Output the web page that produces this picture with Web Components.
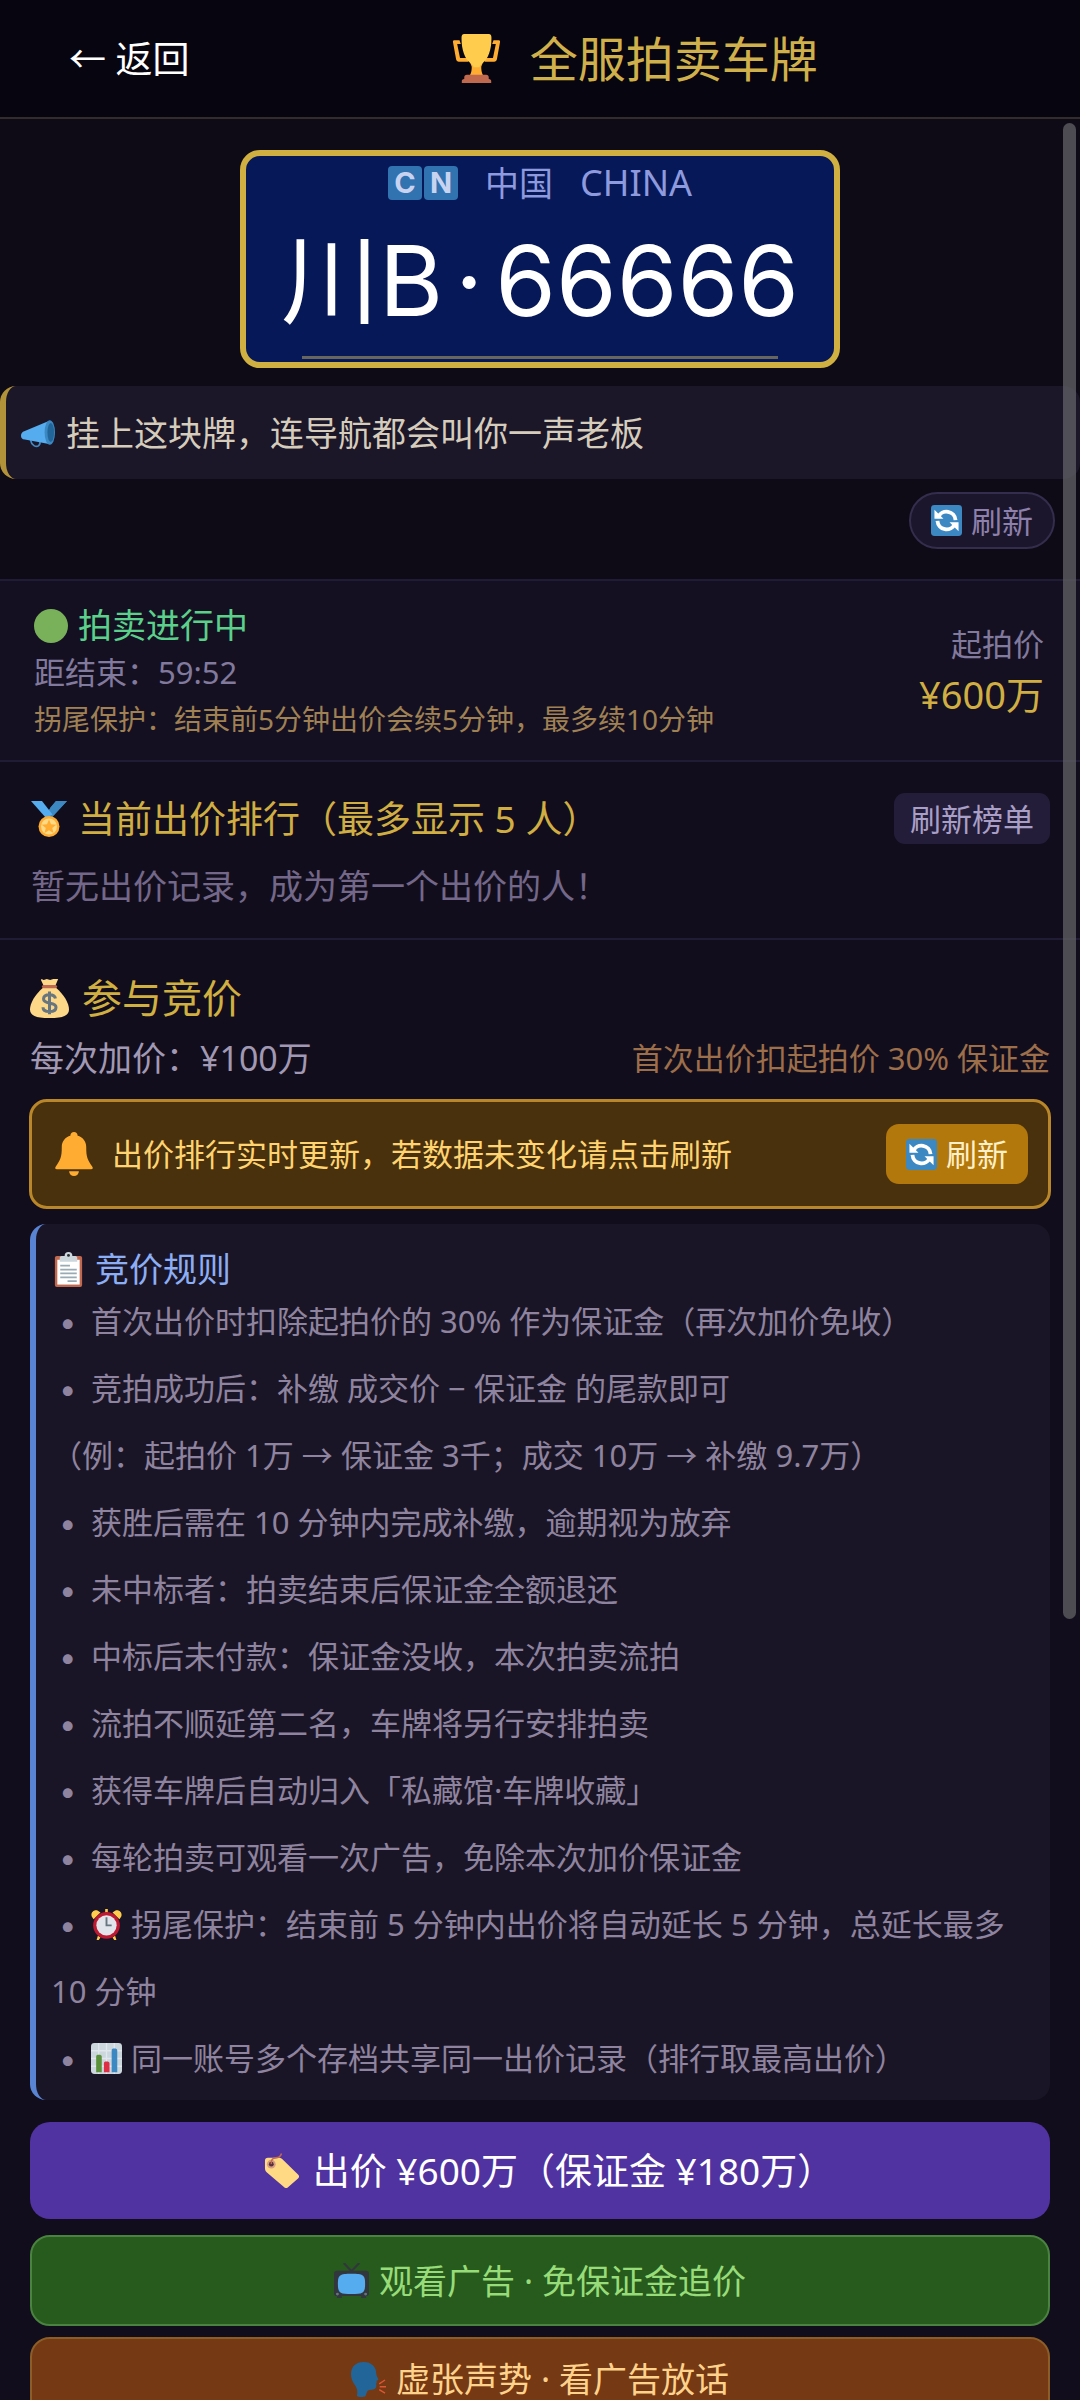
<!DOCTYPE html>
<html lang="zh-CN">
<head>
<meta charset="utf-8">
<meta name="viewport" content="width=device-width, initial-scale=1">
<title>全服拍卖车牌</title>
<style>
  html, body { margin: 0; height: 100%; background: #120d1c; }
  body { font-family: "Noto Sans", "Noto Sans CJK SC", sans-serif; font-size: 31px; }
</style>
</head>
<body>
<auction-page></auction-page>

<script>
const ICONS = {
  trophy: `<path d="M5.5 4.5H1.8C1 4.500 .6 5 .7 5.800L3 18.500C3.200 19.500 4 20.300 5 20.300H12V17.700H5.900L3.800 7.300H6.500ZM30.500 4.500H34.200C35 4.500 35.400 5 35.300 5.800L33 18.500C32.800 19.500 32 20.300 31 20.300H24V17.700H30.100L32.200 7.300H29.500Z" fill="#FFAC33"/><path d="M13 20h10l-1.500 4c0 4 .8 5.500 2.500 8H12c1.700-2.500 2.500-4 2.500-8z" fill="#FFAC33"/><path d="M9 0h18c1.500 0 2 1 2 3 0 9-2.500 15-6 18-1.500 1.500-2.500 2-2.800 3.500h-4.400C15.500 23 14.500 22.500 13 21 9.500 18 7 12 7 3c0-2 .5-3 2-3z" fill="#FFCC4D"/><path d="M11 30h14c1.300 0 2 .7 2 2v1c1.300 0 1.800.7 1.800 1.600V36H7.200v-1.400C7.200 33.700 7.700 33 9 33v-1c0-1.300.7-2 2-2z" fill="#C1694F"/>`,
  megaphone: `<path d="M10 25c1 6 6 9 9 6 2-2 1-5 1-6" fill="none" stroke="#4289C1" stroke-width="1.800"/><path d="M30 5 4 16c-3 1-4 3-4 5s1 4 4 4l27 5z" fill="#55ACEE"/><ellipse cx="30.500" cy="17.500" rx="5.500" ry="13" fill="#3B88C3"/><ellipse cx="31.500" cy="17.500" rx="3.500" ry="10" fill="#226699"/>`,
  refresh: `<rect width="36" height="36" rx="4" fill="#3B88C3"/><path d="M8.400 14A10.500 10.500 0 0 1 28.500 17.500M27.600 22A10.500 10.500 0 0 1 7.500 18.500" fill="none" stroke="#fff" stroke-width="4.400"/><path d="M4 5.500v10.500h10.500zM32 30.500V20H21.500z" fill="#fff"/>`,
  circle: `<circle cx="18" cy="18" r="18" fill="#78B159"/>`,
  medal: `<path d="M36 0H25l-6 7 4 7-5 5z" fill="#3B88C3"/><path d="M36 0H25L14 13.500 20.500 17z" fill="#3B88C3"/><path d="M0 0h11l10.500 13.500L15 17z" fill="#55ACEE"/><circle cx="18" cy="25.500" r="10.500" fill="#FFAC33"/><circle cx="18" cy="25.500" r="8" fill="#FFD983"/><path d="m18 18.500 2 4.800 5.200.4-4 3.300 1.300 5-4.500-2.700L13.500 32l1.300-5-4-3.300 5.200-.4z" fill="#FFAC33"/>`,
  moneybag: `<path d="M12 8h12c7 6 12 14 12 20 0 6-5 8-18 8S0 34 0 28C0 22 5 14 12 8z" fill="#FDD888"/><path d="M11 0c2 2 3 0 4.500 0S18 1.500 20 .5 24 0 26 0l-2.500 6h-11L10 .8z" fill="#FDD888"/><rect x="11" y="5.500" width="14" height="3" rx="1.500" fill="#BF6952"/><path d="M23.500 18c-.5-2.500-3-3.500-5.500-3.500-3 0-5.500 1.300-5.500 4 0 5.500 11.500 2.500 11.500 7.500 0 2.800-2.700 4-6 4s-6-1.300-6-4M18 11.500v21" fill="none" stroke="#67757F" stroke-width="2.800"/>`,
  bell: `<path d="M18 0c1.700 0 3 1.200 3 3 4 1 7 4.500 7 9 0 9 1 10 5 16.500.8 1.300.3 2-1 2H4c-1.300 0-1.800-.7-1-2C7 22 8 21 8 12c0-4.500 3-8 7-9 0-1.800 1.300-3 3-3zM14 32.200h8a4 3.800 0 0 1-8 0z" fill="#FFAC33"/>`,
  clipboard: `<rect x="4" y="4" width="28" height="32" rx="2" fill="#C1694F"/><rect x="6.500" y="8" width="23" height="25.500" fill="#fff"/><path d="M14 4a4 4 0 0 1 8 0h3c1 0 2 1 2 2v4H9V6c0-1 1-2 2-2z" fill="#CCD6DD"/><circle cx="18" cy="3.500" r="1.500" fill="#292F33"/><path d="M9.500 14h10M9.500 18h17M9.500 22h17M9.500 26h17M17 30h9.500" stroke="#99AAB5" stroke-width="1.800"/>`,
  clock: `<path d="M1 9C-1 5 3 0 8 2l3 2-8 8zM35 9c2-4-2-9-7-7l-3 2 8 8z" fill="#FFCC4D"/><path d="M16.500 0h3v5h-3zM8 31l3 2-2 3H6.500zM28 31l-3 2 2 3h2.500z" fill="#FFCC4D"/><circle cx="18" cy="19" r="15.500" fill="#BE1931"/><circle cx="18" cy="19" r="11.800" fill="#E1E4EA"/><path d="M18 9.500V19h6" fill="none" stroke="#66757F" stroke-width="2.200"/>`,
  chart: `<rect width="36" height="36" rx="4" fill="#CCD6DD"/><path d="M0 9h36M0 18h36M0 27h36M9 0v36M18 0v36M27 0v36" stroke="#E1E8ED" stroke-width="1.500"/><path d="M6 34V16c0-2 .7-2.500 3-2.500s3.500.5 3.500 2.500v18z" fill="#5C913B"/><path d="M15 34V24c0-2 .7-2.500 3-2.500s3.500.5 3.500 2.500v10z" fill="#DD2E44"/><path d="M24 34V9c0-2 .7-2.500 3-2.500s3.500.5 3.500 2.500v25z" fill="#3B88C3"/>`,
  tag: `<path d="M1 8C1 6 2 5 4 5l11 0c2 0 3 .5 4.500 2L35 22c1.500 1.500 1.300 3 0 4.200L25 35c-1.500 1.400-3 1.400-4.500 0L3 20c-1.500-1.300-2-2.500-2-4.500z" fill="#FFD983"/><circle cx="7.500" cy="11.500" r="4.500" fill="#D99E82"/><circle cx="7.500" cy="11.500" r="2.500" fill="#54313F"/><path d="M7.500 11.500C7 7 9 5 12 5s5-1.500 6-4.500" fill="none" stroke="#C1694F" stroke-width="1.600"/>`,
  tv: `<path d="m10 0 8 8.500L26 0" fill="none" stroke="#31373D" stroke-width="2.200"/><path d="M3 8h30c2 0 3 1 3 3v20c0 2-1 3-3 3v2h-5v-2H8v2H3v-2c-2 0-3-1-3-3V11c0-2 1-3 3-3z" fill="#31373D"/><path d="M18 11c12 0 14 1 14 10.500S30 32 18 32 4 31 4 21.500 6 11 18 11z" fill="#55ACEE"/><circle cx="3.500" cy="32" r="1.500" fill="#66757F"/><circle cx="32.500" cy="32" r="1.500" fill="#66757F"/>`,
  speaker: `<path d="M13 0c8 0 13 5 13 12 0 2 1.500 4 2 5.500.3 1-.3 1.500-2 1.700.6 1.300.7 2.300-.2 3.200.6 1.700.3 5-2.300 5.600-3 .7-6 .4-7 2.500L15 35c-2 1.300-7 1.300-9 0 1-4 .6-7-1.500-10.500C2 21 0 17 0 12.500 0 5 5 0 13 0z" fill="#269"/><path d="m29 22.500 6-4M29.500 25.500H36M29 28.500l6 3.500" stroke="#DD5533" stroke-width="1.500"/>`
};

/* Defines an element whose shadow root is cloned from a template. */
function define(name, html, init) {
  const template = document.createElement('template');
  template.innerHTML = '<style>*{box-sizing:border-box}:host{display:block}button{font:inherit;cursor:pointer;margin:0}</style>' + html;
  customElements.define(name, class extends HTMLElement {
    constructor() {
      super();
      this.attachShadow({ mode: 'open' }).append(template.content.cloneNode(true));
    }
    connectedCallback() { if (init) init(this, this.shadowRoot); }
  });
}

define('ui-icon', `
  <style>
    :host { display: inline-block; flex: none; width: var(--icon, 36px); height: var(--icon, 36px); }
    svg { display: block; width: 100%; height: 100%; }
  </style>
  <svg viewBox="0 0 36 36" aria-hidden="true"></svg>`,
  (host, root) => { root.querySelector('svg').innerHTML = ICONS[host.getAttribute('name')]; });

define('auction-header', `
  <style>
    :host { background: #070510; border-bottom: 2px solid #322c2c; flex: none; }
    header { display: flex; align-items: center; height: 117px; }
    button { background: none; border: 0; padding: 0 0 0 69px; color: #fff; font-size: 37px; line-height: 60px; }
    h1 { flex: 1; display: flex; justify-content: center; align-items: center; gap: 29px; margin: 0;
         font-size: 48px; line-height: 60px; font-weight: 400; color: #d0b04a; --icon: 49px; }
  </style>
  <header>
    <button type="button">← 返回</button>
    <h1><ui-icon name="trophy"></ui-icon><slot></slot></h1>
  </header>`);

define('license-plate', `
  <style>
    :host { width: 600px; max-width: 100%; margin: 0 auto; }
    .plate { display: flex; flex-direction: column; align-items: center; height: 218px; background: #071858;
             border: 6px solid #d0b040; border-radius: 20px; padding-top: 5px; }
    .country { display: flex; align-items: center; gap: 27px; color: #8e9ade; font-size: 34px; line-height: 44px; }
    .latin { font-size: 36px; }
    .flag { display: flex; gap: 2px; }
    .flag span { width: 34px; border-radius: 4px; background: #3172b0; color: #c9d3f0; text-align: center;
                 font: 700 29px/34px Inter, sans-serif; }
    .number { flex: 1; display: flex; align-items: center; gap: 12px; color: #fff; font-family: Inter, "Noto Sans CJK SC", sans-serif;
              font-size: 98px; line-height: 120px; white-space: nowrap; }
    .seam { width: 476px; height: 3px; background: #67655c; margin-bottom: 3px; }
  </style>
  <div class="plate">
    <div class="country"><span class="flag"><span>C</span><span>N</span></span><span>中国</span><span class="latin">CHINA</span></div>
    <div class="number"><slot></slot></div>
    <div class="seam"></div>
  </div>`);

define('notice-bar', `
  <style>
    .bar { display: flex; align-items: center; gap: 11px; height: 93px; padding-left: 15px; background: #1b1628;
           border-left: 6px solid #b3933a; border-radius: 16px; color: #d5ccbc; font-size: 34px; line-height: 48px; --icon: 34px; }
  </style>
  <div class="bar"><ui-icon name="megaphone"></ui-icon><slot></slot></div>`);

define('refresh-button', `
  <style>
    :host { flex: none; }
    button { display: flex; align-items: center; gap: 9px; height: 57px; padding: 0 20px; background: #1b162b;
             border: 2px solid #352d4d; border-radius: 29px; color: #8e80ac; font-size: 31px; line-height: 40px; --icon: 31px; }
    :host([tone="gold"]) button { height: 60px; background: #b3780c; border: 0; border-radius: 13px; color: #fff0c8; }
  </style>
  <button type="button"><ui-icon name="refresh"></ui-icon><slot></slot></button>`);

define('auction-status', `
  <style>
    section { display: flex; justify-content: space-between; align-items: center; padding: 21px 36px 17px 34px;
              background: #141022; border: solid #211c35; border-width: 2px 0; }
    p { margin: 0; line-height: 47px; font-size: 31px; color: #827a9d; }
    .state { display: flex; align-items: center; gap: 10px; font-size: 34px; color: #5bd08a; --icon: 34px; }
    .guard { font-size: 28px; color: #a08153; }
    .price { text-align: right; padding-bottom: 8px; }
    .price p { line-height: 50px; }
    .price .amount { font-size: 38px; color: #d0ae42; }
  </style>
  <section>
    <div>
      <p class="state"><ui-icon name="circle"></ui-icon>拍卖进行中</p>
      <p>距结束：59:52</p>
      <p class="guard">拐尾保护：结束前5分钟出价会续5分钟，最多续10分钟</p>
    </div>
    <div class="price"><p>起拍价</p><p class="amount">¥600万</p></div>
  </section>`);

define('bid-ranking', `
  <style>
    section { padding: 31px 30px 28px 31px; border-bottom: 2px solid #211c35; }
    .head { display: flex; justify-content: space-between; align-items: center; }
    h2 { display: flex; align-items: center; gap: 11px; margin: 0; font-size: 37px; line-height: 50px; font-weight: 400; color: #d0ae42; }
    button { height: 51px; padding: 0 16px; background: #231d39; border: 0; border-radius: 11px; color: #a99fc6; font-size: 31px; line-height: 40px; }
    p { margin: 18px 0 0; font-size: 34px; line-height: 48px; color: #736889; }
  </style>
  <section>
    <div class="head">
      <h2><ui-icon name="medal"></ui-icon>当前出价排行（最多显示 5 人）</h2>
      <button type="button">刷新榜单</button>
    </div>
    <p>暂无出价记录，成为第一个出价的人！</p>
  </section>`);

define('bid-alert', `
  <style>
    .alert { display: flex; align-items: center; gap: 16px; height: 110px; padding: 0 20px; background: #49310d;
             border: 3px solid #b98628; border-radius: 18px; color: #ffd470; font-size: 31px; line-height: 44px; --icon: 44px; }
    .text { flex: 1; }
  </style>
  <div class="alert" role="status">
    <ui-icon name="bell"></ui-icon><span class="text"><slot></slot></span><refresh-button tone="gold">刷新</refresh-button>
  </div>`);

define('bid-rules', `
  <style>
    section { padding: 26px 21px 8px 15px; background: #1a1526; border-left: 6px solid #5984d4; border-radius: 16px; color: #8f849f; }
    h3 { display: flex; align-items: center; gap: 9px; margin: 0; font-size: 34px; line-height: 38px; font-weight: 400; color: #8caef4; --icon: 35px; }
    ul { margin: 0; padding: 0; list-style: none; font-size: 31px; line-height: 67px; --icon: 31px; }
    li:not(.note)::before { content: "•"; display: inline-block; width: 32px; margin-left: 8px; font-family: Inter, sans-serif; }
    ui-icon { vertical-align: -4px; margin-right: 9px; }
    h3 ui-icon { margin: 0; }
  </style>
  <section>
    <h3><ui-icon name="clipboard"></ui-icon>竞价规则</h3>
    <ul>
      <li>首次出价时扣除起拍价的 30% 作为保证金（再次加价免收）</li>
      <li>竞拍成功后：补缴 成交价 − 保证金 的尾款即可</li>
      <li class="note">（例：起拍价 1万 → 保证金 3千；成交 10万 → 补缴 9.7万）</li>
      <li>获胜后需在 10 分钟内完成补缴，逾期视为放弃</li>
      <li>未中标者：拍卖结束后保证金全额退还</li>
      <li>中标后未付款：保证金没收，本次拍卖流拍</li>
      <li>流拍不顺延第二名，车牌将另行安排拍卖</li>
      <li>获得车牌后自动归入「私藏馆·车牌收藏」</li>
      <li>每轮拍卖可观看一次广告，免除本次加价保证金</li>
      <li><ui-icon name="clock"></ui-icon>拐尾保护：结束前 5 分钟内出价将自动延长 5 分钟，总延长最多 10 分钟</li>
      <li><ui-icon name="chart"></ui-icon>同一账号多个存档共享同一出价记录（排行取最高出价）</li>
    </ul>
  </section>`);

define('action-button', `
  <style>
    button { display: flex; justify-content: center; align-items: center; gap: 10px; width: 100%; height: 91px; padding: 0;
             border: 2px solid #4a8340; border-radius: 20px; background: #275a1d; color: #97dc78; font-size: 34px; line-height: 40px; --icon: 35px; }
    :host([tone="bid"]) button { height: 97px; padding-left: 18px; border: 0; background: #5032a0; color: #fff; font-size: 37px; gap: 14px; }
    :host([tone="bluff"]) button { height: 84px; border-color: #8c5d26; background: #753914; color: #ffd28c; }
  </style>
  <button type="button"><slot name="icon"></slot><slot></slot></button>`);

define('bid-panel', `
  <style>
    section { padding: 30px 30px 20px; }
    h2 { display: flex; align-items: center; gap: 13px; margin: 0; font-size: 40px; line-height: 56px; font-weight: 400; color: #d0b040; --icon: 39px; }
    .terms { display: flex; justify-content: space-between; margin: 8px 0 17px; font-size: 34px; line-height: 48px; color: #a199b3; }
    .terms .deposit { font-size: 31px; color: #9d6e4a; }
    bid-alert { margin: 0 -1px; }
    bid-rules { margin: 15px 0 22px; }
    .actions { display: flex; flex-direction: column; gap: 11px; }
    .actions > :first-child { margin-bottom: 5px; }
  </style>
  <section>
    <h2><ui-icon name="moneybag"></ui-icon>参与竞价</h2>
    <div class="terms"><span>每次加价：¥100万</span><span class="deposit">首次出价扣起拍价 30% 保证金</span></div>
    <bid-alert>出价排行实时更新，若数据未变化请点击刷新</bid-alert>
    <bid-rules></bid-rules>
    <div class="actions">
      <action-button tone="bid"><ui-icon slot="icon" name="tag"></ui-icon>出价 ¥600万（保证金 ¥180万）</action-button>
      <action-button><ui-icon slot="icon" name="tv"></ui-icon>观看广告 · 免保证金追价</action-button>
      <action-button tone="bluff"><ui-icon slot="icon" name="speaker"></ui-icon>虚张声势 · 看广告放话</action-button>
    </div>
  </section>`);

define('auction-page', `
  <style>
    :host { display: flex; flex-direction: column; height: 100vh; overflow: hidden; }
    .view { position: relative; flex: 1; min-height: 0; }
    main { height: 100%; overflow-y: auto; scrollbar-width: none; }
    .hero { padding: 31px 0 30px; background: #0e0b16; }
    notice-bar { margin: 18px 0 13px; }
    .tools { display: flex; justify-content: flex-end; padding-right: 25px; }
    .thumb { position: absolute; top: 4px; right: 4px; width: 13px; height: 65.600%; border-radius: 7px; background: #5e5d62; opacity: .8; pointer-events: none; }
  </style>
  <auction-header>全服拍卖车牌</auction-header>
  <div class="view">
    <main>
      <div class="hero">
        <license-plate><span>川B</span><span>·</span><span>66666</span></license-plate>
        <notice-bar>挂上这块牌，连导航都会叫你一声老板</notice-bar>
        <div class="tools"><refresh-button>刷新</refresh-button></div>
      </div>
      <auction-status></auction-status>
      <bid-ranking></bid-ranking>
      <bid-panel></bid-panel>
    </main>
    <div class="thumb"></div>
  </div>`);
</script>
</body>
</html>
